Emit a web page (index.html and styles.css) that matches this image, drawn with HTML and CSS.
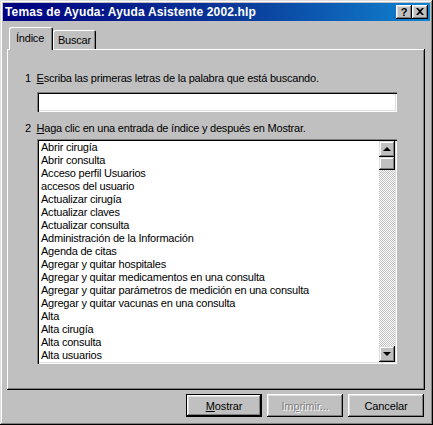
FILE: index.html
```html
<!DOCTYPE html>
<html>
  <head>
    <meta charset="UTF-8" />
    <title>Temas de Ayuda</title>
    <link rel="stylesheet" href="styles.css">
  </head>
  <body>
    <div class="window">
      <div class="titlebar">
        <span class="title">Temas de Ayuda: Ayuda Asistente 2002.hlp</span>
        <div class="title-buttons">
          <span class="tbtn tbtn-help">?</span>
          <span class="tbtn tbtn-close">
            <svg width="8" height="7" viewBox="0 0 8 7"><path d="M0 0h2l2 2 2-2h2L5 3.5 8 7H6L4 5 2 7H0l3-3.5z" fill="#000"/></svg>
          </span>
        </div>
      </div>

      <div class="client">
        <div class="tabs">
          <div class="tab tab-active">Índice</div>
          <div class="tab">Buscar</div>
        </div>

        <div class="panel">
          <p class="step">1&nbsp; <u>E</u>scriba las primeras letras de la palabra que está buscando.</p>
          <div class="field"></div>

          <p class="step">2&nbsp; <u>H</u>aga clic en una entrada de índice y después en Mostrar.</p>
          <div class="listbox">
            <ul class="items">
              <li>Abrir cirugía</li>
              <li>Abrir consulta</li>
              <li>Acceso perfil Usuarios</li>
              <li>accesos del usuario</li>
              <li>Actualizar cirugía</li>
              <li>Actualizar claves</li>
              <li>Actualizar consulta</li>
              <li>Administración de la Información</li>
              <li>Agenda de citas</li>
              <li>Agregar y quitar hospitales</li>
              <li>Agregar y quitar medicamentos en una consulta</li>
              <li>Agregar y quitar parámetros de medición en una consulta</li>
              <li>Agregar y quitar vacunas en una consulta</li>
              <li>Alta</li>
              <li>Alta cirugía</li>
              <li>Alta consulta</li>
              <li>Alta usuarios</li>
            </ul>
            <div class="scrollbar">
              <div class="sbtn"><span class="arrow arrow-up"></span></div>
              <div class="thumb"></div>
              <div class="track"></div>
              <div class="sbtn"><span class="arrow arrow-down"></span></div>
            </div>
          </div>
        </div>

        <div class="actions">
          <button class="btn btn-default"><u>M</u>ostrar</button>
          <button class="btn" disabled>Im<u>p</u>rimir...</button>
          <button class="btn">Cancelar</button>
        </div>
      </div>
    </div>
  </body>
</html>
```

FILE: styles.css
```css
:root {
  --face: #c0c0c0;
  --light: #dfdfdf;
  --shadow: #808080;
  --dark: #000000;
  --hilite: #ffffff;
}

* {
  margin: 0;
  padding: 0;
  box-sizing: border-box;
}

body {
  background: var(--face);
  font-family: 'Liberation Sans', Arial, sans-serif;
  font-size: 11px;
  letter-spacing: -0.22px;
  color: #000;
}

.window {
  width: 433px;
  height: 425px;
  padding: 3px;
  background: var(--face);
  box-shadow:
    inset -1px -1px var(--dark),
    inset 1px 1px var(--light),
    inset -2px -2px var(--shadow),
    inset 2px 2px var(--hilite);
  display: flex;
  flex-direction: column;
}

/* title bar */
.titlebar {
  height: 18px;
  background: linear-gradient(90deg, #000080 0%, #0a3a9a 55%, #1084d0 100%);
  display: flex;
  align-items: center;
  justify-content: space-between;
  padding: 0 2px 0 2px;
}

.title {
  color: #fff;
  font-weight: bold;
  font-size: 12px;
  letter-spacing: 0.15px;
}

.title-buttons {
  display: flex;
}

.tbtn {
  width: 16px;
  height: 14px;
  background: var(--face);
  box-shadow:
    inset -1px -1px var(--dark),
    inset 1px 1px var(--hilite),
    inset -2px -2px var(--shadow),
    inset 2px 2px var(--light);
  display: flex;
  align-items: center;
  justify-content: center;
  font-weight: bold;
  font-size: 11px;
  line-height: 1;
  letter-spacing: 0;
}

.tbtn-close svg {
  display: block;
  margin-top: -1px;
}

/* client area */
.client {
  flex: 1;
  padding: 6px 5px 0 4px;
  display: flex;
  flex-direction: column;
}

.tabs {
  display: flex;
  align-items: flex-end;
  height: 22px;
  padding-left: 2px;
  position: relative;
  z-index: 1;
}

.tab {
  height: 19px;
  padding: 0 5px;
  display: flex;
  align-items: center;
  border-radius: 2px 2px 0 0;
  box-shadow:
    inset 1px 1px var(--hilite),
    inset -1px 0 var(--dark),
    inset -2px 0 var(--shadow);
}

.tab:nth-child(2) {
  width: 43px;
  padding-top: 1px;
}

.tab-active {
  width: 44px;
  height: 23px;
  margin-bottom: -1px;
  background: var(--face);
  padding: 0 0 2px 7px;
}

.panel {
  height: 341px;
  box-shadow:
    inset -1px -1px var(--dark),
    inset 1px 1px var(--hilite),
    inset -2px -2px var(--shadow);
  padding: 23px 0 0 30px;
}

.step {
  line-height: 13px;
  margin-left: -12px;
}

.field {
  width: 360px;
  height: 20px;
  margin: 7px 0 10px;
  background: #fff;
  box-shadow:
    inset 1px 1px var(--shadow),
    inset 2px 2px var(--dark),
    inset -1px -1px var(--hilite),
    inset -2px -2px var(--light);
}

.listbox {
  width: 360px;
  height: 225px;
  margin-top: 4px;
  padding: 2px;
  background: #fff;
  box-shadow:
    inset 1px 1px var(--shadow),
    inset 2px 2px var(--dark),
    inset -1px -1px var(--hilite),
    inset -2px -2px var(--light);
  display: flex;
}

.items {
  flex: 1;
  list-style: none;
  padding-left: 2px;
}

.items li {
  height: 13px;
  line-height: 13px;
  white-space: nowrap;
}

.scrollbar {
  width: 16px;
  display: flex;
  flex-direction: column;
}

.sbtn,
.thumb {
  height: 16px;
  background: var(--face);
  box-shadow:
    inset -1px -1px var(--dark),
    inset 1px 1px var(--light),
    inset -2px -2px var(--shadow),
    inset 2px 2px var(--hilite);
  display: flex;
  align-items: center;
  justify-content: center;
}

.thumb {
  height: 13px;
}

.track {
  flex: 1;
  background: repeating-conic-gradient(var(--face) 0 25%, var(--hilite) 0 50%) 0 0 / 2px 2px;
}

.arrow {
  width: 0;
  height: 0;
  border-left: 4px solid transparent;
  border-right: 4px solid transparent;
}

.arrow-up {
  border-bottom: 4px solid #000;
  margin-top: -1px;
}

.arrow-down {
  border-top: 4px solid #000;
}

/* bottom buttons */
.actions {
  display: flex;
  justify-content: flex-end;
  gap: 5px;
  padding-top: 4px;
  padding-right: 1px;
}

.btn {
  width: 76px;
  height: 23px;
  font-family: inherit;
  font-size: 11px;
  letter-spacing: -0.1px;
  color: #000;
  background: var(--face);
  border: none;
  box-shadow:
    inset -1px -1px var(--dark),
    inset 1px 1px var(--hilite),
    inset -2px -2px var(--shadow),
    inset 2px 2px var(--light);
}

.btn-default {
  box-shadow:
    inset 0 0 0 1px var(--dark),
    inset -2px -2px var(--dark),
    inset 2px 2px var(--hilite),
    inset -3px -3px var(--shadow),
    inset 3px 3px var(--light);
}

.btn:disabled {
  color: var(--shadow);
  text-shadow: 1px 1px var(--hilite);
}
```
